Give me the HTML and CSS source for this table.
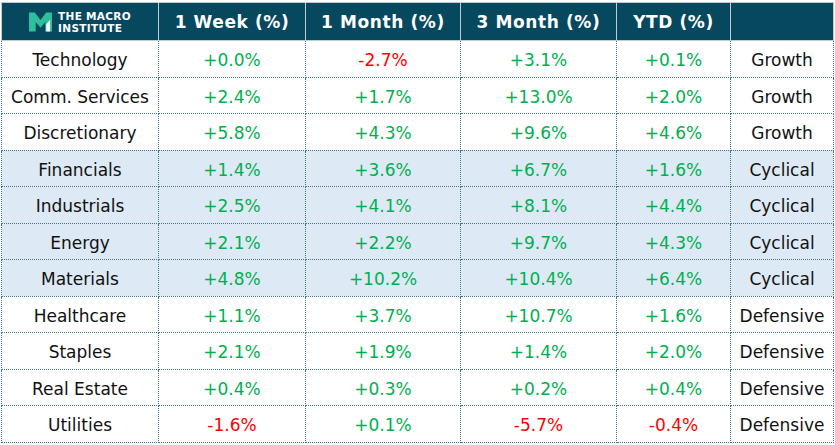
FILE: index.html
```html
<!DOCTYPE html>
<html>
<head>
<meta charset="utf-8">
<link rel="stylesheet" href="styles.css">
</head>
<body>
<table class="grid">
  <colgroup>
    <col class="c1"><col class="c2"><col class="c3"><col class="c4"><col class="c5"><col class="c6">
  </colgroup>
  <thead>
    <tr>
      <th class="logo-cell">
        <div class="logo">
          <svg class="logo-mark" viewBox="0 0 24 20" width="23" height="20" aria-hidden="true">
            <polygon points="0,0 6,0 12,8 18,0 24,0 24,20 17,20 17,10 12,16 7,10 7,20 0,20" fill="#2cc09c"/>
            <polygon points="18,20 18,12 22,8 22,20" fill="#ffffff"/>
          </svg>
          <div class="logo-text"><span>THE MACRO</span><span>INSTITUTE</span></div>
        </div>
      </th>
      <th>1 Week (%)</th>
      <th>1 Month (%)</th>
      <th>3 Month (%)</th>
      <th>YTD (%)</th>
      <th></th>
    </tr>
  </thead>
  <tbody>
    <tr><td>Technology</td><td class="up">+0.0%</td><td class="down">-2.7%</td><td class="up">+3.1%</td><td class="up">+0.1%</td><td>Growth</td></tr>
    <tr><td>Comm. Services</td><td class="up">+2.4%</td><td class="up">+1.7%</td><td class="up">+13.0%</td><td class="up">+2.0%</td><td>Growth</td></tr>
    <tr><td>Discretionary</td><td class="up">+5.8%</td><td class="up">+4.3%</td><td class="up">+9.6%</td><td class="up">+4.6%</td><td>Growth</td></tr>
    <tr class="shade"><td>Financials</td><td class="up">+1.4%</td><td class="up">+3.6%</td><td class="up">+6.7%</td><td class="up">+1.6%</td><td>Cyclical</td></tr>
    <tr class="shade"><td>Industrials</td><td class="up">+2.5%</td><td class="up">+4.1%</td><td class="up">+8.1%</td><td class="up">+4.4%</td><td>Cyclical</td></tr>
    <tr class="shade"><td>Energy</td><td class="up">+2.1%</td><td class="up">+2.2%</td><td class="up">+9.7%</td><td class="up">+4.3%</td><td>Cyclical</td></tr>
    <tr class="shade"><td>Materials</td><td class="up">+4.8%</td><td class="up">+10.2%</td><td class="up">+10.4%</td><td class="up">+6.4%</td><td>Cyclical</td></tr>
    <tr><td>Healthcare</td><td class="up">+1.1%</td><td class="up">+3.7%</td><td class="up">+10.7%</td><td class="up">+1.6%</td><td>Defensive</td></tr>
    <tr><td>Staples</td><td class="up">+2.1%</td><td class="up">+1.9%</td><td class="up">+1.4%</td><td class="up">+2.0%</td><td>Defensive</td></tr>
    <tr><td>Real Estate</td><td class="up">+0.4%</td><td class="up">+0.3%</td><td class="up">+0.2%</td><td class="up">+0.4%</td><td>Defensive</td></tr>
    <tr><td>Utilities</td><td class="down">-1.6%</td><td class="up">+0.1%</td><td class="down">-5.7%</td><td class="down">-0.4%</td><td>Defensive</td></tr>
  </tbody>
</table>
</body>
</html>
```
FILE: styles.css
```css
html, body {
  margin: 0;
  padding: 0;
  background: #ffffff;
}
body {
  padding: 2px 0 0 1px;
  font-family: "DejaVu Sans", Verdana, sans-serif;
}
.grid {
  border-collapse: collapse;
  table-layout: fixed;
  width: 832px;
}
.c1 { width: 157px; }
.c2 { width: 147px; }
.c3 { width: 155px; }
.c4 { width: 156px; }
.c5 { width: 114px; }
.c6 { width: 103px; }

.grid th {
  background: #06495f;
  color: #ffffff;
  font-weight: bold;
  font-size: 17px;
  letter-spacing: 0.6px;
  height: 37px;
  padding: 0;
  border: 1px solid #c3ccd0;
  text-align: center;
  vertical-align: middle;
}
.grid td {
  height: 32.5px;
  padding: 3px 0 0 0;
  font-size: 17px;
  color: #111111;
  text-align: center;
  vertical-align: middle;
  border: 1px dotted #3f7690;
}
.grid tr.shade td { background: #dde9f5; }
.grid td.up { color: #00b050; }
.grid td.down { color: #ff0000; }

.logo {
  display: flex;
  align-items: center;
  justify-content: center;
  gap: 6px;
}
.logo-mark { display: block; }
.logo-text {
  display: flex;
  flex-direction: column;
  text-align: left;
  font-size: 10.5px;
  line-height: 12px;
  font-weight: 900;
  letter-spacing: 0.3px;
}
```
